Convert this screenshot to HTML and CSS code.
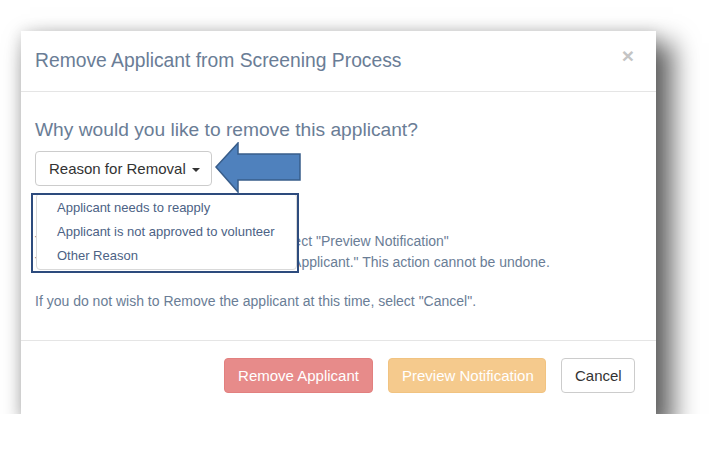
FILE: index.html
```html
<!DOCTYPE html>
<html>
<head>
<meta charset="utf-8">
<link rel="stylesheet" href="styles.css">
</head>
<body>
<div class="page">
  <div class="modal">
    <div class="modal-header">
      <h4 class="modal-title">Remove Applicant from Screening Process</h4>
      <span class="close">&times;</span>
    </div>
    <div class="modal-body">
      <h4 class="question">Why would you like to remove this applicant?</h4>
      <div class="dropdown">
        <button class="btn btn-default">Reason for Removal <span class="caret"></span></button>
        <ul class="menu">
          <li>Applicant needs to reapply</li>
          <li>Applicant is not approved to volunteer</li>
          <li>Other Reason</li>
        </ul>
        <div class="highlight"></div>
        <svg class="arrow" width="90" height="54" viewBox="0 0 90 54">
          <path d="M2 25 L24 1 L24 12 L86 12 L86 38 L24 38 L24 50 Z" fill="#4f81bd" stroke="#385d8a" stroke-width="1.5" stroke-linejoin="miter"/>
        </svg>
      </div>
      <p class="info">To notify the applicant before removal, select "Preview Notification"<br>To remove the applicant, select "Remove Applicant." This action cannot be undone.</p>
      <p class="info">If you do not wish to Remove the applicant at this time, select "Cancel".</p>
    </div>
    <div class="modal-footer">
      <button class="btn btn-danger">Remove Applicant</button>
      <button class="btn btn-warning">Preview Notification</button>
      <button class="btn btn-default">Cancel</button>
    </div>
  </div>
</div>
</body>
</html>
```
FILE: styles.css
```css
* { box-sizing: border-box; }
html, body { margin: 0; padding: 0; background: #fff; }
body { font-family: "Liberation Sans", Arial, sans-serif; color: #333; }
.page { padding: 31px 0 0 21px; }
.modal {
  width: 635px;
  height: 383px;
  background: #fff;
  display: flex;
  flex-direction: column;
  box-shadow: 13px 16px 24px 4px rgba(0,0,0,0.6), 0 0 14px rgba(0,0,0,0.12);
}
.modal-header {
  height: 61px;
  padding: 0 22px 0 14px;
  border-bottom: 1px solid #e5e5e5;
  display: flex;
  align-items: center;
  justify-content: space-between;
}
.modal-title {
  margin: 0;
  font-size: 19.3px;
  font-weight: normal;
  color: #6a7d96;
  line-height: 26px;
}
.close {
  font-size: 21px;
  font-weight: bold;
  color: #c4c4c4;
  line-height: 1;
  margin-top: -12px;
}
.modal-body {
  flex: 1;
  padding: 25px 14px 0 14px;
}
.question {
  margin: 0;
  font-size: 19.2px;
  font-weight: normal;
  color: #6a7d96;
  line-height: 26px;
}
.dropdown {
  position: relative;
  margin-top: 8px;
  height: 35px;
}
.btn {
  font-family: "Liberation Sans", Arial, sans-serif;
  font-size: 15px;
  height: 35px;
  padding: 0 13px;
  border-radius: 4px;
  border: 1px solid transparent;
  line-height: 33px;
  white-space: nowrap;
}
.btn-default { background: #fff; border-color: #ccc; color: #333; }
.dropdown .btn-default { width: 177px; text-align: left; padding-left: 13px; }
.caret {
  display: inline-block;
  width: 0; height: 0;
  border-top: 4px solid #333;
  border-left: 4px solid transparent;
  border-right: 4px solid transparent;
  vertical-align: middle;
  margin-left: 2px;
}
.menu {
  position: absolute;
  left: 1px;
  top: 42px;
  width: 261px;
  margin: 0;
  padding: 2px 0 1px;
  list-style: none;
  background: #fff;
  border: 1px solid #d9d9d9;
  border-radius: 4px;
  z-index: 2;
}
.menu li {
  padding: 3px 20px;
  font-size: 13px;
  line-height: 18px;
  color: #4c6285;
  white-space: nowrap;
}
.highlight {
  position: absolute;
  left: -4px;
  top: 42px;
  width: 268px;
  height: 80px;
  border: 2px solid #2d4b7d;
  z-index: 3;
}
.arrow {
  position: absolute;
  left: 179px;
  top: -9px;
  z-index: 3;
}
.info {
  margin: 45px 0 0 0;
  font-size: 14px;
  line-height: 21px;
  color: #6a7d96;
  white-space: nowrap;
}
.info + .info { margin-top: 18px; }
.modal-footer {
  height: 74px;
  border-top: 1px solid #e5e5e5;
  padding: 17px 21px 0 0;
  display: flex;
  justify-content: flex-end;
  align-items: flex-start;
  gap: 15px;
}
.btn-danger { background: #e78b8a; border-color: #e2807f; color: #fff; }
.btn-warning { background: #f5ca8d; border-color: #f1c381; color: #fff; }
.modal-footer .btn-danger { width: 149px; }
.modal-footer .btn-warning { width: 158px; }
.modal-footer .btn-default { width: 74px; }
```
